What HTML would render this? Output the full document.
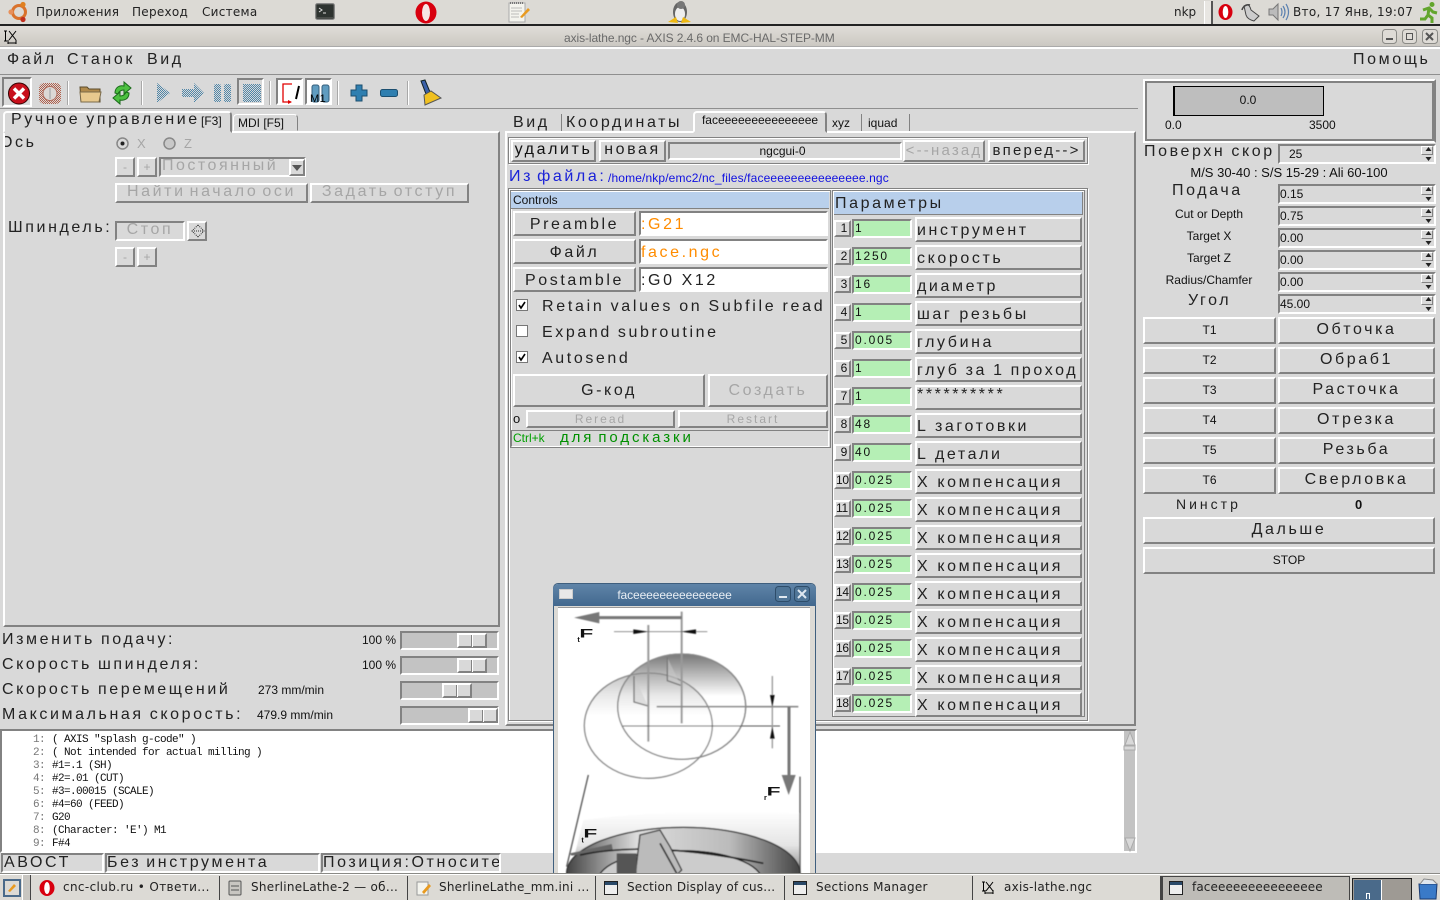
<!DOCTYPE html>
<html><head><meta charset="utf-8"><title>AXIS</title>
<style>
html,body{margin:0;padding:0;width:1440px;height:900px;overflow:hidden;background:#d9d9d9;font-family:"Liberation Sans",sans-serif;color:#111}
div,span.t{position:absolute;box-sizing:border-box;white-space:nowrap}
svg{position:absolute;overflow:visible}
.s{font-size:16px;letter-spacing:2.6px;word-spacing:-1px;color:#222;line-height:18px}
.b{border:2px solid;border-color:#fff #828282 #828282 #fff;background:#d9d9d9;display:flex;align-items:center;justify-content:center;font-size:16px;letter-spacing:2.6px;word-spacing:-1px;color:#222;overflow:hidden}
.d{border:2px solid;border-color:#828282 #fff #fff #828282;background:#d9d9d9;display:flex;align-items:center;overflow:hidden}
.sm{font-size:12px;letter-spacing:0;color:#111}
.g{color:#a6a6a6}
.p{font-family:"DejaVu Sans",sans-serif;font-size:12px;letter-spacing:.28px;color:#222;line-height:16px}
.e{border:2px solid;border-color:#828282 #fff #fff #828282;background:#fff;display:flex;align-items:center;overflow:hidden;font-size:16px;letter-spacing:2.6px;padding-top:2px}
.n{left:834px;width:17px;height:17px;border:2px solid;border-color:#fff #828282 #828282 #fff;font-size:12px;text-align:right;line-height:13px;padding-right:2px;letter-spacing:-.3px}
.v{left:852px;width:60px;height:19px;border:2px solid;border-color:#828282 #fff #fff #828282;background:#b5efb5;font-size:12px;line-height:15px;padding-left:1px;letter-spacing:1.8px}
.l{left:915px;width:167px;height:25px;border:2px solid;border-color:#fff #828282 #828282 #fff;font-size:16px;letter-spacing:2.6px;line-height:23px;color:#222;padding-left:0;overflow:hidden}
.sp{left:1278px;width:158px;height:20px;border:2px solid;border-color:#828282 #fff #fff #828282;font-size:12px;line-height:17px;padding-left:0}
.sp:after{content:"";position:absolute;right:1px;top:0;width:10px;height:7px;border:1px solid #fff;border-right-color:#828282;border-bottom-color:#828282;background:#d9d9d9}
.r{text-align:center;font-size:12px;width:140px;left:1139px}
.tr{left:400px;width:99px;height:19px;border:2px solid;border-color:#828282 #fff #fff #828282;background:#c3c3c3}
.th{top:0;width:30px;height:15px;border:2px solid;border-color:#fff #828282 #828282 #fff;background:#d9d9d9}
.th:after{content:"";position:absolute;left:12px;top:0;height:12px;border-left:1px solid #828282;border-right:1px solid #fff}
.m{font-family:"Liberation Mono",monospace;font-size:11px;letter-spacing:-.6px;color:#111;left:52px;line-height:13px}
.ln{font-family:"Liberation Mono",monospace;font-size:11px;letter-spacing:-.6px;color:#777;left:33px;line-height:13px}
.sep{width:2px;height:24px;top:81px;background:#a8a8a8;border-right:1px solid #fff}
.tb{top:876px;height:24px;border-right:1px solid #444}
.rb{padding-bottom:1px}
</style></head><body>
<svg width="0" height="0" style="left:0;top:0"><defs>
<pattern id="st" width="2" height="2" patternUnits="userSpaceOnUse"><rect width="2" height="2" fill="#d9d9d9"/><rect width="1" height="1" fill="#4f86a8"/><rect x="1" y="1" width="1" height="1" fill="#4f86a8"/></pattern>
<pattern id="sr" width="2" height="2" patternUnits="userSpaceOnUse"><rect width="2" height="2" fill="#d9d9d9"/><rect width="1" height="1" fill="#b0604c"/><rect x="1" y="1" width="1" height="1" fill="#b0604c"/></pattern>
</defs></svg>

<!-- Top GNOME panel -->
<div style="left:0;top:0;width:1440px;height:24px;background:#dcdad5"></div>
<div style="left:0;top:24px;width:1440px;height:2px;background:#222"></div>
<svg style="left:8px;top:1px" width="21" height="22" viewBox="0 0 21 22"><circle cx="11" cy="11" r="6.5" fill="none" stroke="#d9722c" stroke-width="3"/><circle cx="3" cy="11" r="2.6" fill="#e8905a"/><circle cx="15" cy="3.5" r="2.6" fill="#e08020"/><circle cx="15" cy="18.5" r="2.6" fill="#c03020"/></svg>
<div class="p" style="left:36px;top:4px">Приложения</div>
<div class="p" style="left:132px;top:4px">Переход</div>
<div class="p" style="left:202px;top:4px">Система</div>
<svg style="left:315px;top:3px" width="20" height="18"><rect x=".5" y=".5" width="19" height="16" rx="2" fill="#4a4d4a" stroke="#888"/><rect x="2" y="2" width="16" height="12" fill="#2e3330"/><path d="M4 5l3 2-3 2M8 10h3" stroke="#ddd" fill="none"/></svg>
<svg style="left:415px;top:1px" width="22" height="23"><ellipse cx="11" cy="11.5" rx="10.5" ry="11" fill="#d8000f"/><ellipse cx="11" cy="11.5" rx="4" ry="8.5" fill="#f6e6e6"/></svg>
<svg style="left:508px;top:1px" width="23" height="22"><rect x="1" y="2" width="16" height="19" fill="#f4f4ee" stroke="#aaa"/><path d="M3 7h11M3 10h11M3 13h8M3 16h8" stroke="#bbb"/><path d="M2 2h14" stroke="#777" stroke-dasharray="1 1" stroke-width="2"/><path d="M12 16l8-9 2 2-8 8z" fill="#e89a20"/></svg>
<svg style="left:668px;top:0" width="23" height="24"><ellipse cx="12" cy="12" rx="7" ry="10" fill="#666"/><ellipse cx="12" cy="14" rx="5" ry="7" fill="#eee"/><circle cx="13" cy="5" r="4" fill="#777"/><path d="M0 22l8-5 2 6zM23 22l-8-5-2 6z" fill="#eeb810"/></svg>
<div class="p" style="left:1174px;top:4px;letter-spacing:0">nkp</div>
<div style="left:1204px;top:1px;width:9px;height:23px;background:#e8e6e2;border-right:2px solid #555;border-left:1px solid #fff"></div>
<svg style="left:1218px;top:3px" width="15" height="18"><ellipse cx="7.5" cy="9" rx="7" ry="8" fill="#d8000f"/><ellipse cx="7.5" cy="9" rx="2.8" ry="6" fill="#fff"/></svg>
<svg style="left:1241px;top:2px" width="20" height="21"><path d="M3 4c4-3 6 0 7 4l8 6-5 5c-4-1-7-3-8-6z" fill="#ccc" stroke="#444"/><path d="M1 8c1-4 5-6 8-5" fill="none" stroke="#444" stroke-width="1.5"/></svg>
<svg style="left:1268px;top:3px" width="21" height="18"><path d="M1 6h4l5-5v16l-5-5H1z" fill="#bbb" stroke="#777"/><path d="M13 5q2 4 0 8M15 3q4 6 0 12M18 1q5 8 0 16" fill="none" stroke="#5a80b0" stroke-width="1.2"/></svg>
<div class="p" style="left:1293px;top:4px;letter-spacing:.3px">Вто, 17 Янв, 19:07</div>
<svg style="left:1419px;top:1px" width="20" height="23"><circle cx="13" cy="3.5" r="2.5" fill="#62a52c"/><path d="M4 9l6-2 4 4 4 1M10 7l-1 7 4 3 0 5M9 14l-3 4-5 0" fill="none" stroke="#62a52c" stroke-width="3"/></svg>

<!-- Title bar -->
<div style="left:0;top:26px;width:1440px;height:21px;background:linear-gradient(#e0ddd8,#cbc8c2);border-bottom:1px solid #aaa"></div>
<svg style="left:3px;top:30px" width="15" height="15"><path d="M1 1h3M1 11h3M2.5 1v10M6 1l7 9M13 1l-7 9M5 13h8M5 10v4M13 10v4" stroke="#000" fill="none"/></svg>
<div style="left:564px;top:30px;font-size:12px;letter-spacing:-.09px;color:#6a6a6a;line-height:16px">axis-lathe.ngc - AXIS 2.4.6 on EMC-HAL-STEP-MM</div>
<svg style="left:1381px;top:28px" width="58" height="18"><g fill="#dedbd6" stroke="#8a8a86"><rect x="1.5" y="1.5" width="14" height="14" rx="3"/><rect x="21.5" y="1.5" width="14" height="14" rx="3"/><rect x="41.5" y="1.5" width="15" height="14" rx="3"/></g><path d="M5 11h7" stroke="#555" stroke-width="2"/><rect x="25.5" y="5.5" width="6" height="6" fill="none" stroke="#555"/><path d="M45 5l7 7M52 5l-7 7" stroke="#555" stroke-width="2"/></svg>
<div style="left:0;top:47px;width:1440px;height:2px;background:#fff"></div>

<!-- Menu -->
<div class="s" style="left:7px;top:51px">Файл</div>
<div class="s" style="left:67px;top:51px">Станок</div>
<div class="s" style="left:147px;top:51px">Вид</div>
<div class="s" style="left:1353px;top:51px">Помощь</div>
<div style="left:0;top:74px;width:1440px;height:1px;background:#8f8f8f"></div>

<!-- Toolbar -->
<div style="left:2px;top:77px;width:30px;height:30px;border:2px solid;border-color:#828282 #fff #fff #828282"></div>
<svg style="left:8px;top:82px" width="22" height="23"><circle cx="11" cy="11.5" r="10.5" fill="#c8101c" stroke="#300"/><path d="M6 6.5l10 10M16 6.5l-10 10" stroke="#fff" stroke-width="3.4"/></svg>
<svg style="left:38px;top:82px" width="24" height="23"><rect x="1" y="1" width="22" height="21" rx="5" fill="url(#sr)"/><circle cx="12" cy="11.5" r="7" fill="#dcd8d5" stroke="#b06a5a"/><path d="M12 6v11" stroke="#bbb" stroke-width="2"/></svg>
<div class="sep" style="left:67px"></div>
<svg style="left:79px;top:83px" width="23" height="20"><path d="M1 4h7l2 2h11v13H2z" fill="#b08a4c" stroke="#5a4a2a"/><path d="M1 9h21l-2 10H2z" fill="#e8c98e" stroke="#7a6a4a"/></svg>
<svg style="left:111px;top:81px" width="22" height="24"><path d="M4 12c0-6 5-8 9-7V1l7 6-7 6V9c-3 0-5 1-6 4z" fill="#4cc040" stroke="#1a6a1a"/><path d="M18 12c0 6-5 8-9 7v4l-7-6 7-6v4c3 0 5-1 6-4z" fill="#4cc040" stroke="#1a6a1a"/></svg>
<div class="sep" style="left:141px"></div>
<svg style="left:156px;top:82px" width="15" height="22"><path d="M1 1l13 10L1 21z" fill="url(#st)"/></svg>
<svg style="left:181px;top:82px" width="24" height="22"><path d="M1 7h12V1l10 10-10 10v-6H1z" fill="url(#st)"/></svg>
<svg style="left:213px;top:83px" width="20" height="20"><rect x="1" y="1" width="7" height="18" rx="2" fill="url(#st)"/><rect x="11" y="1" width="7" height="18" rx="2" fill="url(#st)"/></svg>
<div style="left:237px;top:78px;width:27px;height:27px;border:2px solid;border-color:#828282 #fff #fff #828282"></div>
<svg style="left:243px;top:84px" width="18" height="18"><rect x="0" y="0" width="18" height="18" fill="url(#st)"/></svg>
<div class="sep" style="left:269px"></div>
<div style="left:276px;top:78px;width:27px;height:27px;border:2px solid;border-color:#828282 #fff #fff #828282;background:#fff"></div>
<svg style="left:282px;top:83px" width="20" height="20"><path d="M10 1H1v18h8" fill="none" stroke="#e00000" stroke-width="1.3"/><path d="M6 17l4 2-4 2z" fill="#e00000"/><path d="M17 3l-3 13" stroke="#000" stroke-width="2"/></svg>
<div style="left:305px;top:78px;width:27px;height:27px;border:2px solid;border-color:#828282 #fff #fff #828282;background:#fff"></div>
<svg style="left:311px;top:84px" width="20" height="20"><rect x="1" y="1" width="7" height="17" rx="2" fill="#5f9cc0" stroke="#355f7c"/><rect x="11" y="1" width="7" height="17" rx="2" fill="#5f9cc0" stroke="#355f7c"/></svg>
<span class="t" style="left:310px;top:93px;font-size:11px;line-height:12px;color:#000;letter-spacing:.5px">M1</span>
<div class="sep" style="left:337px"></div>
<svg style="left:350px;top:84px" width="18" height="18"><path d="M6 1h6v5h5v6h-5v5H6v-5H1V6h5z" fill="#2f7fb0" stroke="#1c4f70"/></svg>
<svg style="left:380px;top:88px" width="18" height="10"><rect x=".5" y="1.5" width="17" height="7" rx="2" fill="#2f7fb0" stroke="#1c4f70"/></svg>
<div class="sep" style="left:407px"></div>
<svg style="left:420px;top:81px" width="22" height="25"><path d="M1 0l4-1 5 12-4 2z" fill="#3a60a8" stroke="#122"/><path d="M4 14l7-4 10 7-16 7z" fill="#f0c020" stroke="#555"/></svg>
<div style="left:0;top:108px;width:1138px;height:1px;background:#8f8f8f"></div>

<!-- Left notebook -->
<div style="left:3px;top:131px;width:497px;height:496px;border:2px solid;border-color:#fff #828282 #828282 #fff"></div>
<div style="left:3px;top:111px;width:229px;height:22px;border:2px solid;border-color:#fff #828282 transparent #fff;border-radius:4px 4px 0 0;background:#d9d9d9"></div>
<div class="s" style="left:11px;top:111px">Ручное управление</div>
<div style="left:201px;top:114px;font-size:12px;line-height:14px">[F3]</div>
<div style="left:233px;top:114px;width:65px;height:17px;border:1px solid;border-color:#fff #828282 transparent #fff;border-radius:4px 4px 0 0"></div>
<div style="left:238px;top:116px;font-size:12px;line-height:14px">MDI [F5]</div>

<div class="s" style="left:1px;width:40px;top:134px;overflow:hidden;clip-path:inset(0 0 0 4px);text-indent:-1px">Ось</div>
<svg style="left:116px;top:137px" width="14" height="13"><circle cx="6.5" cy="6.5" r="5.5" fill="#d9d9d9" stroke="#888" stroke-width="1.5"/><circle cx="6.5" cy="6.5" r="2" fill="#222"/></svg>
<span class="t g" style="left:137px;top:136px;font-size:13px;line-height:15px">X</span>
<svg style="left:163px;top:137px" width="14" height="13"><circle cx="6.5" cy="6.5" r="5.5" fill="#c8c8c8" stroke="#888" stroke-width="1.5"/></svg>
<span class="t g" style="left:184px;top:136px;font-size:13px;line-height:15px">Z</span>

<div class="b g" style="left:115px;top:157px;width:20px;height:20px;font-size:12px;letter-spacing:0">-</div>
<div class="b g" style="left:137px;top:157px;width:20px;height:20px;font-size:12px;letter-spacing:0">+</div>
<div class="d g" style="left:159px;top:157px;width:147px;height:20px;font-size:16px;letter-spacing:2.5px;padding:0 0 3px 1px;justify-content:flex-start;border-right-color:#fff">Постоянный</div>
<div class="b" style="left:289px;top:159px;width:16px;height:17px"></div>
<svg style="left:292px;top:165px" width="11" height="7"><path d="M0 0h10L5 6z" fill="#555"/></svg>
<div class="b g" style="left:115px;top:183px;width:193px;height:20px;padding-bottom:3px;word-spacing:-3px">Найти начало оси</div>
<div class="b g" style="left:310px;top:183px;width:159px;height:20px;padding-bottom:3px;word-spacing:-3px">Задать отступ</div>
<div class="s" style="left:8px;top:219px">Шпиндель:</div>
<div class="d g" style="left:115px;top:221px;width:70px;height:20px;justify-content:center;font-size:16px;letter-spacing:2.6px;padding-bottom:2px">Стоп</div>
<div class="b" style="left:187px;top:221px;width:20px;height:20px"></div>
<svg style="left:190px;top:224px" width="15" height="14"><path d="M8 1L2 7l6 6M8 1l6 6-6 6M2 7h12" fill="none" stroke="#333" stroke-dasharray="1 1"/></svg>
<div class="b g" style="left:115px;top:247px;width:20px;height:20px;font-size:12px;letter-spacing:0">-</div>
<div class="b g" style="left:137px;top:247px;width:20px;height:20px;font-size:12px;letter-spacing:0">+</div>

<!-- Sliders -->
<div class="s" style="left:2px;top:631px">Изменить подачу:</div>
<div class="s" style="left:2px;top:656px">Скорость шпинделя:</div>
<div class="s" style="left:2px;top:681px">Скорость перемещений</div>
<div class="s" style="left:2px;top:706px">Максимальная скорость:</div>
<div style="left:362px;top:633px;font-size:12px;line-height:14px">100 %</div>
<div style="left:362px;top:658px;font-size:12px;line-height:14px">100 %</div>
<div style="left:258px;top:683px;font-size:12px;line-height:14px">273 mm/min</div>
<div style="left:257px;top:708px;font-size:12px;line-height:14px">479.9 mm/min</div>
<div class="tr" style="top:631px"><div class="th" style="left:55px"></div></div>
<div class="tr" style="top:656px"><div class="th" style="left:55px"></div></div>
<div class="tr" style="top:681px"><div class="th" style="left:40px"></div></div>
<div class="tr" style="top:706px"><div class="th" style="left:66px"></div></div>

<!-- Center notebook -->
<div style="left:505px;top:131px;width:631px;height:595px;border:2px solid;border-color:#fff #828282 #828282 #fff"></div>
<div class="s" style="left:513px;top:114px">Вид</div>
<div class="s" style="left:566px;top:114px">Координаты</div>
<div style="left:561px;top:114px;width:1px;height:17px;background:#828282"></div>
<div style="left:693px;top:111px;width:134px;height:22px;border:2px solid;border-color:#fff #828282 transparent #fff;border-radius:4px 4px 0 0;background:#d9d9d9;font-size:12px;text-align:center;line-height:15px;letter-spacing:0">faceeeeeeeeeeeeeee</div>
<div style="left:832px;top:116px;font-size:12px;line-height:14px">xyz</div>
<div style="left:868px;top:116px;font-size:12px;line-height:14px">iquad</div>
<div style="left:861px;top:114px;width:1px;height:17px;background:#828282"></div>
<div style="left:909px;top:114px;width:1px;height:17px;background:#828282"></div>

<div style="left:508px;top:137px;width:580px;height:27px;border:1px solid #828282;box-shadow:inset 1px 1px 0 #fff,1px 1px 0 #fff"></div>
<div class="b" style="left:511px;top:140px;width:85px;height:22px;color:#111;padding-bottom:2px">удалить</div>
<div class="b" style="left:599px;top:140px;width:67px;height:22px;padding-bottom:2px">новая</div>
<div class="d" style="left:668px;top:142px;width:234px;height:18px;font-size:12px;justify-content:center;padding-right:5px">ngcgui-0</div>
<div class="b g" style="left:903px;top:140px;width:82px;height:22px;font-size:15px;letter-spacing:2.2px;padding-bottom:2px">&lt;--назад</div>
<div class="b" style="left:988px;top:140px;width:97px;height:22px;font-size:15px;letter-spacing:2.2px;padding-bottom:2px">вперед--&gt;</div>
<div class="s" style="left:509px;top:168px;color:#1a22d8;word-spacing:-3px">Из файла:</div>
<div style="left:608px;top:171px;font-size:12px;line-height:14px;color:#1010e0;letter-spacing:.13px">/home/nkp/emc2/nc_files/faceeeeeeeeeeeeeee.ngc</div>

<div style="left:508px;top:188px;width:580px;height:533px;border:1px solid #828282;box-shadow:inset 1px 1px 0 #fff,1px 1px 0 #fff"></div>
<div style="left:510px;top:190px;width:321px;height:258px;border:1px solid #828282;box-shadow:inset 1px 1px 0 #fff"></div>
<div style="left:511px;top:192px;width:318px;height:17px;background:#b9d0ec;border-bottom:1px solid #828282;font-size:12px;line-height:16px;padding-left:2px">Controls</div>
<div class="b" style="left:513px;top:211px;width:123px;height:25px;padding-top:2px">Preamble</div>
<div class="b" style="left:513px;top:239px;width:123px;height:25px;padding-top:2px">Файл</div>
<div class="b" style="left:513px;top:267px;width:123px;height:25px;padding-top:2px">Postamble</div>
<div class="e" style="left:639px;top:211px;width:189px;height:25px;color:#ff8c00">:G21</div>
<div class="e" style="left:639px;top:239px;width:189px;height:25px;color:#ff8c00">face.ngc</div>
<div class="e" style="left:639px;top:267px;width:189px;height:25px;color:#222">:G0 X12</div>
<svg style="left:516px;top:299px" width="12" height="12"><rect x=".5" y=".5" width="11" height="11" fill="#fff" stroke="#777"/><path d="M3 6l2 3 4-6" fill="none" stroke="#000" stroke-width="1.6"/></svg>
<div class="s" style="left:542px;top:298px;letter-spacing:2.7px">Retain values on Subfile read</div>
<svg style="left:516px;top:325px" width="12" height="12"><rect x=".5" y=".5" width="11" height="11" fill="#fff" stroke="#777"/></svg>
<div class="s" style="left:542px;top:324px">Expand subroutine</div>
<svg style="left:516px;top:351px" width="12" height="12"><rect x=".5" y=".5" width="11" height="11" fill="#fff" stroke="#777"/><path d="M3 6l2 3 4-6" fill="none" stroke="#000" stroke-width="1.6"/></svg>
<div class="s" style="left:542px;top:350px">Autosend</div>
<div class="b" style="left:513px;top:374px;width:192px;height:33px">G-код</div>
<div class="b g" style="left:708px;top:374px;width:120px;height:33px">Создать</div>
<div style="left:513px;top:412px;font-size:13px;line-height:14px">o</div>
<div class="b g" style="left:526px;top:410px;width:149px;height:18px;font-size:12px;letter-spacing:2px">Reread</div>
<div class="b g" style="left:678px;top:410px;width:150px;height:18px;font-size:12px;letter-spacing:2px">Restart</div>
<div style="left:511px;top:430px;width:318px;height:17px;border:1px solid;border-color:#828282 #fff #fff #828282"></div>
<div style="left:513px;top:431px;font-size:12px;line-height:14px;color:#00a000">Ctrl+k</div>
<div class="s" style="left:560px;top:429px;color:#009000;font-size:15px;letter-spacing:2.9px;word-spacing:-3px">для подсказки</div>

<div style="left:832px;top:190px;width:253px;height:527px;border:1px solid #828282;box-shadow:inset 1px 1px 0 #fff"></div>
<div class="s" style="left:834px;top:192px;width:249px;height:23px;background:#b8cfeb;border:1px solid #828282;border-top:none;border-left:none;line-height:24px;padding-left:1px">Параметры</div>

<div class="n" style="top:220px">1</div><div class="v" style="top:219px">1</div><div class="l" style="top:217px">инструмент</div>
<div class="n" style="top:248px">2</div><div class="v" style="top:247px">1250</div><div class="l" style="top:245px">скорость</div>
<div class="n" style="top:276px">3</div><div class="v" style="top:275px">16</div><div class="l" style="top:273px">диаметр</div>
<div class="n" style="top:304px">4</div><div class="v" style="top:303px">1</div><div class="l" style="top:301px">шаг резьбы</div>
<div class="n" style="top:332px">5</div><div class="v" style="top:331px">0.005</div><div class="l" style="top:329px">глубина</div>
<div class="n" style="top:360px">6</div><div class="v" style="top:359px">1</div><div class="l" style="top:357px;word-spacing:-1px">глуб за 1 проход</div>
<div class="n" style="top:388px">7</div><div class="v" style="top:387px">1</div><div class="l" style="top:385px;line-height:16px">**********</div>
<div class="n" style="top:416px">8</div><div class="v" style="top:415px">48</div><div class="l" style="top:413px">L заготовки</div>
<div class="n" style="top:444px">9</div><div class="v" style="top:443px">40</div><div class="l" style="top:441px">L детали</div>
<div class="n" style="top:472px">10</div><div class="v" style="top:471px">0.025</div><div class="l" style="top:469px">X компенсация</div>
<div class="n" style="top:500px">11</div><div class="v" style="top:499px">0.025</div><div class="l" style="top:497px">X компенсация</div>
<div class="n" style="top:528px">12</div><div class="v" style="top:527px">0.025</div><div class="l" style="top:525px">X компенсация</div>
<div class="n" style="top:556px">13</div><div class="v" style="top:555px">0.025</div><div class="l" style="top:553px">X компенсация</div>
<div class="n" style="top:584px">14</div><div class="v" style="top:583px">0.025</div><div class="l" style="top:581px">X компенсация</div>
<div class="n" style="top:612px">15</div><div class="v" style="top:611px">0.025</div><div class="l" style="top:609px">X компенсация</div>
<div class="n" style="top:640px">16</div><div class="v" style="top:639px">0.025</div><div class="l" style="top:637px">X компенсация</div>
<div class="n" style="top:668px">17</div><div class="v" style="top:667px">0.025</div><div class="l" style="top:665px">X компенсация</div>
<div class="n" style="top:695px">18</div><div class="v" style="top:694px">0.025</div><div class="l" style="top:692px">X компенсация</div>

<!-- Right column -->
<div style="left:1143px;top:79px;width:293px;height:64px;border:2px solid;border-color:#fff #828282 #fff #fff;box-shadow:inset 2px 2px 0 #828282,inset -2px -2px 0 #828282"></div>
<div style="left:1173px;top:86px;width:151px;height:30px;background:#bebebe;border:1px solid #000;border-left-width:2px;font-size:12px;text-align:center;line-height:27px;padding-right:2px">0.0</div>
<div style="left:1165px;top:118px;font-size:12px;line-height:14px">0.0</div>
<div style="left:1309px;top:118px;font-size:12px;line-height:14px">3500</div>
<div class="s" style="left:1144px;top:143px">Поверхн скор</div>
<div class="sp" style="top:144px;padding-left:9px;line-height:16px">25</div>
<div style="left:1130px;top:166px;width:318px;text-align:center;font-size:13px;line-height:14px">M/S 30-40 : S/S 15-29 : Ali 60-100</div>
<div class="s" style="left:1172px;top:182px">Подача</div>
<div class="sp" style="top:184px">0.15</div>
<div class="r" style="top:207px">Cut or Depth</div>
<div class="sp" style="top:206px">0.75</div>
<div class="r" style="top:229px">Target X</div>
<div class="sp" style="top:228px">0.00</div>
<div class="r" style="top:251px">Target Z</div>
<div class="sp" style="top:250px">0.00</div>
<div class="r" style="top:273px">Radius/Chamfer</div>
<div class="sp" style="top:272px">0.00</div>
<div class="s" style="left:1188px;top:292px">Угол</div>
<div class="sp" style="top:294px">45.00</div>
<svg style="left:1423px;top:146px" width="11" height="170"><g fill="#222"><path d="M5.5 1l3 4h-6zM5.5 15l3-4h-6z"/><path transform="translate(0 40)" d="M5.5 1l3 4h-6zM5.5 15l3-4h-6z"/><path transform="translate(0 62)" d="M5.5 1l3 4h-6zM5.5 15l3-4h-6z"/><path transform="translate(0 84)" d="M5.5 1l3 4h-6zM5.5 15l3-4h-6z"/><path transform="translate(0 106)" d="M5.5 1l3 4h-6zM5.5 15l3-4h-6z"/><path transform="translate(0 128)" d="M5.5 1l3 4h-6zM5.5 15l3-4h-6z"/><path transform="translate(0 150)" d="M5.5 1l3 4h-6zM5.5 15l3-4h-6z"/></g></svg>

<div class="b sm rb" style="left:1143px;top:317px;width:133px;height:27px">T1</div>
<div class="b rb" style="left:1278px;top:317px;width:157px;height:27px">Обточка</div>
<div class="b sm rb" style="left:1143px;top:347px;width:133px;height:27px">T2</div>
<div class="b rb" style="left:1278px;top:347px;width:157px;height:27px">Обраб1</div>
<div class="b sm rb" style="left:1143px;top:377px;width:133px;height:27px">T3</div>
<div class="b rb" style="left:1278px;top:377px;width:157px;height:27px">Расточка</div>
<div class="b sm rb" style="left:1143px;top:407px;width:133px;height:27px">T4</div>
<div class="b rb" style="left:1278px;top:407px;width:157px;height:27px">Отрезка</div>
<div class="b sm rb" style="left:1143px;top:437px;width:133px;height:27px">T5</div>
<div class="b rb" style="left:1278px;top:437px;width:157px;height:27px">Резьба</div>
<div class="b sm rb" style="left:1143px;top:467px;width:133px;height:27px">T6</div>
<div class="b rb" style="left:1278px;top:467px;width:157px;height:27px">Сверловка</div>
<div style="left:1176px;top:496px;font-size:14px;letter-spacing:3px;line-height:16px;color:#222">Nинстр</div>
<div style="left:1355px;top:497px;font-size:13px;font-weight:bold;line-height:15px">0</div>
<div class="b rb" style="left:1143px;top:517px;width:292px;height:27px">Дальше</div>
<div class="b sm" style="left:1143px;top:547px;width:292px;height:27px;padding-bottom:1px">STOP</div>

<!-- Code box -->
<div style="left:0;top:729px;width:1137px;height:124px;background:#fff;border:2px solid;border-color:#828282 #fff #fff #828282"></div>
<div style="left:1124px;top:731px;width:11px;height:120px;background:#c3c3c3"></div>
<svg style="left:1124px;top:730px" width="12" height="122"><path d="M1 15L6 2l5 13z" fill="#d9d9d9" stroke="#aaa"/><rect x="0" y="16" width="11" height="4" fill="#d9d9d9" stroke="#aaa"/><path d="M1 108l5 13 5-13z" fill="#d9d9d9" stroke="#aaa"/></svg>
<div class="ln" style="top:734px">1:</div><div class="m" style="top:734px">( AXIS "splash g-code" )</div>
<div class="ln" style="top:747px">2:</div><div class="m" style="top:747px">( Not intended for actual milling )</div>
<div class="ln" style="top:760px">3:</div><div class="m" style="top:760px">#1=.1 (SH)</div>
<div class="ln" style="top:773px">4:</div><div class="m" style="top:773px">#2=.01 (CUT)</div>
<div class="ln" style="top:786px">5:</div><div class="m" style="top:786px">#3=.00015 (SCALE)</div>
<div class="ln" style="top:799px">6:</div><div class="m" style="top:799px">#4=60 (FEED)</div>
<div class="ln" style="top:812px">7:</div><div class="m" style="top:812px">G20</div>
<div class="ln" style="top:825px">8:</div><div class="m" style="top:825px">(Character: 'E') M1</div>
<div class="ln" style="top:838px">9:</div><div class="m" style="top:838px">F#4</div>

<!-- Status -->
<div class="d s" style="left:1px;top:853px;width:103px;height:20px;padding:0 0 0 1px">АВОСТ</div>
<div class="d s" style="left:105px;top:853px;width:215px;height:20px;padding:0;word-spacing:-2px">Без инструмента</div>
<div class="d s" style="left:321px;top:853px;width:180px;height:20px;padding:0;letter-spacing:2.6px">Позиция:Относите</div>

<!-- Floating window -->
<div style="left:553px;top:583px;width:263px;height:293px;background:#dcdad5;border:1px solid #3f5f7e;border-radius:5px 5px 0 0;overflow:hidden"></div>
<div style="left:553px;top:584px;width:263px;height:22px;background:linear-gradient(#5f84a8,#42688e);border-radius:5px 5px 0 0;color:#e8eef4;font-size:12px;text-align:center;line-height:22px;padding-right:20px;letter-spacing:-.1px">faceeeeeeeeeeeeeee</div>
<div style="left:559px;top:589px;width:14px;height:10px;background:#e8e8e8;border:1px solid #ccc"></div>
<svg style="left:775px;top:586px" width="35" height="18"><rect x=".5" y=".5" width="15" height="15" rx="3" fill="#4f7597" stroke="#2e4d6a"/><rect x="19.5" y=".5" width="15" height="15" rx="3" fill="#4f7597" stroke="#2e4d6a"/><path d="M4 11h8" stroke="#dfe8f0" stroke-width="2"/><path d="M23 4l8 8M31 4l-8 8" stroke="#dfe8f0" stroke-width="2"/></svg>
<div style="left:558px;top:607px;width:252px;height:268px;background:#fff;overflow:hidden;border-top:1px solid #999">
<svg style="left:-8px;top:-28px" width="270" height="300" viewBox="0 0 810 900">
<defs>
<linearGradient id="g1" x1="0" y1="0" x2="0" y2="1"><stop offset="0" stop-color="#777"/><stop offset=".2" stop-color="#bbb"/><stop offset=".4" stop-color="#fff"/></linearGradient>
<linearGradient id="g2" x1="0" y1="0" x2="0" y2="1"><stop offset="0" stop-color="#aaa"/><stop offset=".2" stop-color="#ddd"/><stop offset=".4" stop-color="#fff"/></linearGradient>
<linearGradient id="g3" x1="0" y1="0" x2="0" y2="1"><stop offset="0" stop-color="#fff"/><stop offset=".55" stop-color="#e4e4e4"/><stop offset="1" stop-color="#888"/></linearGradient>
<linearGradient id="g4" x1="0" y1="0" x2="1" y2="0"><stop offset="0" stop-color="#444"/><stop offset=".3" stop-color="#ddd"/><stop offset=".7" stop-color="#bbb"/><stop offset="1" stop-color="#444"/></linearGradient>
<filter id="bl"><feGaussianBlur stdDeviation="1.5"/></filter>
</defs>
<g filter="url(#bl)">
<ellipse cx="395" cy="380" rx="192" ry="158" fill="url(#g1)" stroke="#888" stroke-width="4"/>
<ellipse cx="295" cy="437" rx="192" ry="158" fill="url(#g2)" fill-opacity=".7" stroke="#888" stroke-width="4"/>
<ellipse cx="395" cy="380" rx="192" ry="158" fill="none" stroke="#888" stroke-width="4"/>
<path d="M352 232v70l40 14M252 288v78l42 12" fill="#ccc" fill-opacity=".5" stroke="#777" stroke-width="4"/>
<path d="M395 95v335M295 135v350" stroke="#999" stroke-width="6"/>
<path d="M192 155h280" stroke="#555" stroke-width="2"/>
<path d="M250 148l45 7-45 7zM438 148l-45 7 45 7z" fill="#111"/>
<path d="M395 113H145" stroke="#777" stroke-width="9"/>
<path d="M72 113l76-17v34z" fill="#777"/>
<path d="M320 380h425" stroke="#888" stroke-width="5"/>
<path d="M218 438h472" stroke="#555" stroke-width="3"/>
<path d="M667 288v217" stroke="#999" stroke-width="4"/>
<path d="M660 345h14l-7 36zM660 476h14l-7-36z" fill="#111"/>
<path d="M717 380v210" stroke="#777" stroke-width="9"/>
<path d="M695 585h42l-21 60z" fill="#777"/>
<path d="M100 720Q420 680 750 700V880H60z" fill="url(#g3)"/>
<path d="M115 585L50 860M750 590v290" stroke="#555" stroke-width="4"/>
<ellipse cx="400" cy="880" rx="350" ry="138" fill="url(#g4)" stroke="#333" stroke-width="4"/>
<ellipse cx="390" cy="900" rx="245" ry="88" fill="#ccc" stroke="#111" stroke-width="4"/>
<path d="M60 820l125-28 4 20-125 15z" fill="#666"/>
<path d="M90 825Q300 780 640 850" fill="none" stroke="#222" stroke-width="5"/>
<path d="M270 765l60-15 30 50 35 70-20 20H255z" fill="#bbb" stroke="#333" stroke-width="4"/>
<path d="M200 820h60v70h-60z" fill="#555"/>
<path d="M330 790l50 90" stroke="#333" stroke-width="5"/>
</g>
<g font-family="Liberation Sans" font-weight="bold" fill="#111">
<text transform="translate(88 172) scale(1.9 1)" font-size="36">F</text>
<text x="82" y="186" font-size="22">t</text>
<text transform="translate(650 646) scale(1.9 1)" font-size="36">F</text>
<text x="642" y="660" font-size="22">r</text>
<text transform="translate(100 772) scale(1.9 1)" font-size="36">F</text>
<text x="94" y="788" font-size="22">t</text>
</g>
</svg>
</div>

<!-- Taskbar -->
<div style="left:0;top:873px;width:1440px;height:27px;background:#dcdad5;border-top:1px solid #8a8a86;box-shadow:inset 0 1px 0 #fff"></div>
<svg style="left:3px;top:879px" width="18" height="18"><rect x="1" y="1" width="16" height="16" fill="#dcdad5" stroke="#4a6a8a" stroke-width="2"/><path d="M5 12l6-7 2 2-6 6z" fill="#e89a20"/></svg>
<div style="left:22px;top:875px;width:9px;height:25px;background:#c8c6c1;border-right:1px solid #444;border-left:1px solid #fff"></div>
<div class="tb" style="left:32px;width:188px"></div><svg style="left:39px;top:879px" width="16" height="18"><ellipse cx="8" cy="9" rx="7.5" ry="8" fill="#d8000f"/><ellipse cx="8" cy="9" rx="2.8" ry="6" fill="#fff"/></svg><div class="p" style="left:63px;top:879px;letter-spacing:.36px">cnc-club.ru • Ответи...</div>
<div class="tb" style="left:220px;width:188px"></div><svg style="left:228px;top:880px" width="14" height="16"><rect x="1" y="1" width="12" height="14" rx="1" fill="#c8c6c1" stroke="#555"/><path d="M3 6h8M3 10h8" stroke="#555"/></svg><div class="p" style="left:251px;top:879px">SherlineLathe-2 — об...</div>
<div class="tb" style="left:408px;width:188px"></div><svg style="left:416px;top:880px" width="15" height="16"><rect x="1" y="2" width="11" height="13" fill="#f4f4ee" stroke="#999"/><path d="M6 12l7-8 2 2-7 8z" fill="#e89a20"/></svg><div class="p" style="left:439px;top:879px;letter-spacing:.2px">SherlineLathe_mm.ini ...</div>
<div class="tb" style="left:596px;width:189px"></div><svg style="left:604px;top:881px" width="14" height="14"><rect x=".5" y=".5" width="13" height="13" fill="#eee" stroke="#222"/><rect x="1" y="1" width="12" height="3" fill="#2a4a6a"/></svg><div class="p" style="left:627px;top:879px;letter-spacing:.18px">Section Display of cus...</div>
<div class="tb" style="left:785px;width:188px"></div><svg style="left:793px;top:881px" width="14" height="14"><rect x=".5" y=".5" width="13" height="13" fill="#eee" stroke="#222"/><rect x="1" y="1" width="12" height="3" fill="#2a4a6a"/></svg><div class="p" style="left:816px;top:879px">Sections Manager</div>
<div class="tb" style="left:973px;width:188px"></div><svg style="left:981px;top:881px" width="13" height="14"><path d="M1 1h3M1 10h3M2.5 1v9M5 1l7 9M12 1l-7 9M4 12h8M4 9v4M12 9v4" stroke="#000" fill="none"/></svg><div class="p" style="left:1004px;top:879px">axis-lathe.ngc</div>
<div class="tb" style="left:1161px;width:189px;background:#bebcb7;border-left:2px solid #444;border-top:1px solid #444"></div><svg style="left:1169px;top:881px" width="14" height="14"><rect x=".5" y=".5" width="13" height="13" fill="#eee" stroke="#222"/><rect x="1" y="1" width="12" height="3" fill="#2a4a6a"/></svg><div class="p" style="left:1192px;top:879px;letter-spacing:.1px">faceeeeeeeeeeeeeee</div>
<div style="left:1352px;top:878px;width:60px;height:22px;background:#9e9a94;border:1px solid #222;border-bottom:none"></div>
<div style="left:1354px;top:880px;width:28px;height:20px;background:#4a6a8a;border-right:1px solid #fff"></div>
<div style="left:1366px;top:893px;width:4px;height:6px;border:1px solid #fff;border-bottom:none"></div>
<svg style="left:1417px;top:877px" width="22" height="23"><path d="M2 7h18l-1 15H3z" fill="#3a7ac8" stroke="#1a3a70"/><path d="M3 7l4-5 9 1 4 4" fill="#dfe6ee" stroke="#888"/></svg>
</body></html>
